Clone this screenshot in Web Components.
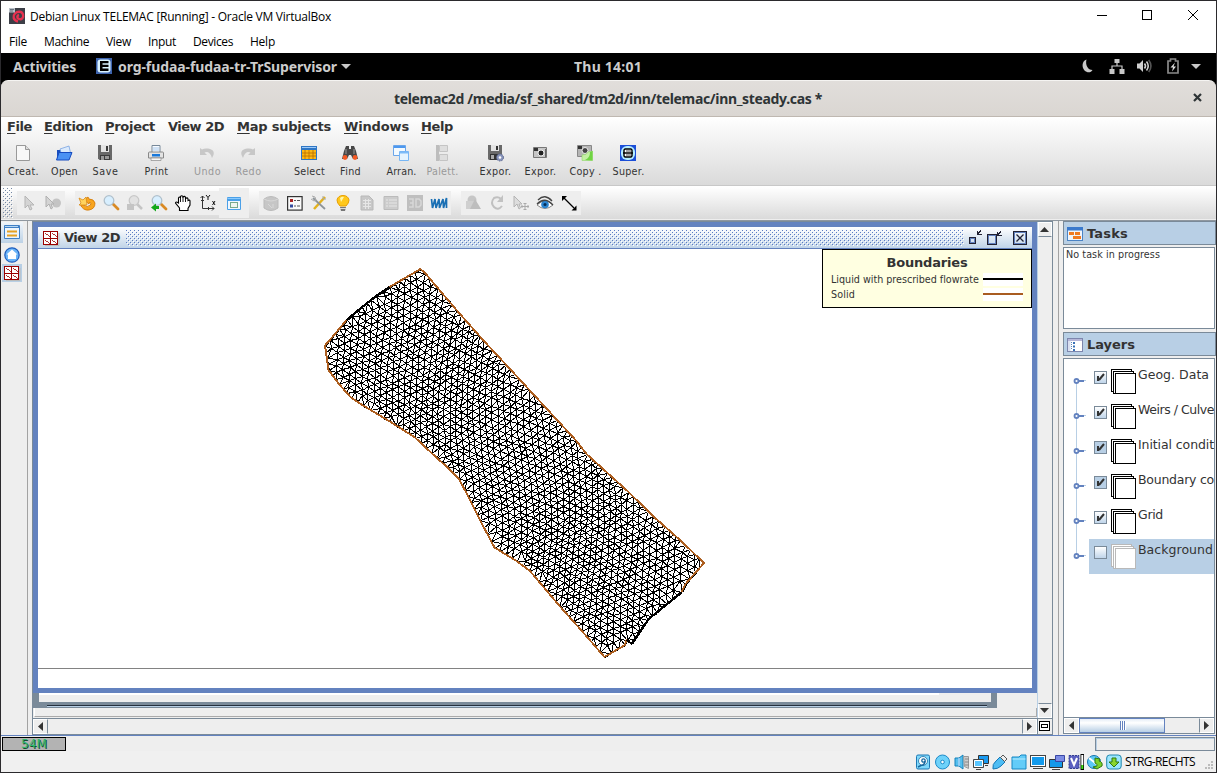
<!DOCTYPE html>
<html lang="en">
<head>
<meta charset="utf-8">
<title>Debian Linux TELEMAC [Running] - Oracle VM VirtualBox</title>
<style>
html,body{margin:0;padding:0;background:#2b2a2d}
body{width:1217px;height:773px;overflow:hidden}
</style>
</head>
<body>
<vm-window></vm-window>
<script>
const define = (tag, css, html, hook) => {
  const t = document.createElement('template');
  t.innerHTML = `<style>*,:host{box-sizing:border-box}${css}</style>${html}`;
  customElements.define(tag, class extends HTMLElement {
    connectedCallback() {
      if (this.shadowRoot) return;
      this.attachShadow({mode: 'open'}).append(t.content.cloneNode(true));
      if (hook) hook(this, this.shadowRoot);
    }
  });
};

/* Icon set, drawn on a 16 x 16 grid */
const grid = '<path d="M2 15.500h14V3" fill="none" stroke="#bbb"/><g fill="#fff" stroke="#9b0000" shape-rendering="crispEdges"><rect x=".5" y="1.500" width="14" height="13"/><path d="M7.500 1v14M0 8.500h15" stroke-width="1.200"/><path d="M2 3l5 4M9 3l5 4M2 10l5 4M9 10l5 4" stroke-width=".8"/></g>';
const ICONS = {
  debian: '<rect width="16" height="16" fill="#3c3f47"/><path d="M9 13.500C4 12 3.500 8 6 5.500S13 3 14 6.500s-1.500 5.500-4 4.500S8 7.500 10 7" fill="none" stroke="#e8314f" stroke-width="2.400"/><rect width="6" height="4.500" fill="#b9c0c8"/><path d="M1 1.500h4M1 3h3" stroke="#68727d"/>',
  eicon: '<rect width="16" height="16" fill="#3d63ad"/><rect x="1.500" y="1.500" width="13" height="13" rx="3" fill="#d9f2ff"/><path d="M4 3h8.500v2.200H6.500v1.500h6V9h-6v1.500h6V13H4z" fill="#000"/>',
  moon: '<path d="M6.500 1.500C2 3 1.500 9 4.500 12.500c2.500 2.500 6.500 2.500 8-.5C8 12 5 7 6.500 1.500z" fill="#c8c8c8"/>',
  net: '<path d="M5.500 1h5v4h-5zM.5 11h5v5h-5zM10.500 11h5v5h-5z" fill="#c8c8c8"/><path d="M8 5v3M3 11V8h10v3" fill="none" stroke="#c8c8c8" stroke-width="1.200"/>',
  vol: '<path d="M1 5.500h2.500L7 2v12L3.500 10.500H1z" fill="#d0d0d0"/><path d="M8.500 5.500q2 2.500 0 5M10.500 3.500q3.500 4.500 0 9" fill="none" stroke="#d0d0d0" stroke-width="1.600"/><path d="M12.700 2q4.500 6 0 12" fill="none" stroke="#555" stroke-width="1.600"/>',
  bat: '<path d="M3 3h2.500V1h5v2H13v12H3z" fill="none" stroke="#8a8a8a" stroke-width="1.700"/><path d="M10 4.500L5.500 9.500H8l-1 4 4-5H8.500z" fill="#e0e0e0"/>',
  down: '<path d="M3 6h10l-5 5z" fill="#c8c8c8"/>',
  page: '<path d="M1.500.5h9l4 4v11h-13z" fill="#f8f8f8" stroke="#999"/><path d="M10.500.5v4h4" fill="#ddd" stroke="#999"/>',
  open: '<path d="M1 5h6l1-2h5v11H1z" fill="#184dbe"/><path d="M4 4l9-3 2 9-9 2z" fill="#dbeafc" stroke="#6b9be0" stroke-width=".7"/><path d="M.5 15L3 7.500h13L13 15z" fill="#4a91f3" stroke="#164bc0"/>',
  save: '<path d="M1 0h14v15H2.500L1 13.500z" fill="#686868"/><path d="M4 0h8v7H4z" fill="#e4e4e4"/><path d="M9 1h2v5H9zM3 10h10v5H3z" fill="#3b3b3b"/><path d="M4 11h3v4H4zM8 11h4v3H8z" fill="#989898"/>',
  print: '<path d="M4 .5h8V8H4z" fill="#f7fbff" stroke="#789"/><path d="M.5 8q0-1 1-1h13q1 0 1 1v5H.5z" fill="#e3e3e3" stroke="#888"/><path d="M5 3h6M5 5h6" stroke="#a7c7ea"/><path d="M4 9h8v2.500H4z" fill="#1878db"/><path d="M3 13h10v2.500H3z" fill="#f8f8f8" stroke="#888" stroke-width=".7"/>',
  undo: '<path d="M1 3v7h7L5.500 7.500q5-2 7.500 5.500 5-8-4-9.500-4-.4-6 1z" fill="#c7c7c7"/>',
  redo: '<path d="M15 3v7H8l2.500-2.500q-5-2-7.500 5.500-5-8 4-9.500 4-.4 6 1z" fill="#c7c7c7"/>',
  table: '<path d="M0 1h16v14H0z" fill="#2f76c4"/><path d="M1 5h14v9H1z" fill="#fdb813"/><path d="M1 8h14M1 11h14M4 5v9M8 5v9M12 5v9" stroke="#b56d00" stroke-width=".8"/><path d="M1 2.500h14" stroke="#9ccafa"/>',
  find: '<path d="M4 1h3v3h2V1h3l2 5 2 8h-5l-2-4H7l-2 4H0l2-8z" fill="#474747"/><path d="M4 4v5M12 4v5" stroke="#999"/><circle cx="3" cy="12.500" r="2.400" fill="#f45a25"/><circle cx="13" cy="12.500" r="2.400" fill="#f45a25"/>',
  arr: '<path d="M.5.5h12v10H.5z" fill="#f4faff" stroke="#6ba6ea"/><path d="M1 1h11v2H1z" fill="#4d98ef"/><path d="M6.500 6.500h9v9h-9z" fill="#e5f4ff" stroke="#77b6f5"/><path d="M7 7h8v1.500H7z" fill="#7dbcf8"/>',
  pal: '<path d="M2 0h3v16H2z" fill="#bdbdbd"/><path d="M5.500.5h8v6h-8zM5.500 9.500h8v6h-8z" fill="#dedede" stroke="#c4c4c4"/>',
  expsave: '<path d="M1 0h14v15H2l-1-1z" fill="#696969"/><path d="M4 0h8v6H4z" fill="#e4e4e4"/><path d="M9 1h2v4H9zM3 9h9v6H3z" fill="#333"/><path d="M4 10h3v4H4z" fill="#aaa"/><circle cx="13" cy="12.500" r="3.500" fill="#8894bb" stroke="#5b668c" stroke-dasharray="1.500 1"/><circle cx="13" cy="12.500" r="1.300" fill="#fff"/>',
  cam: '<path d="M1.500 2.500h13v10h-13z" fill="#c6c6c6" stroke="#777"/><path d="M2 3h4v3H2z" fill="#333"/><circle cx="9" cy="8" r="3" fill="#222" stroke="#eee"/><path d="M13.500 4v8" stroke="#666"/>',
  copy: '<path d="M.5.5h14v11H.5z" fill="#b4b4b4" stroke="#888"/><path d="M1 1h4v3H1z" fill="#333"/><circle cx="8" cy="5.500" r="3" fill="#444" stroke="#eee"/><path d="M5 15.500V10q5 0 6-3l4.500-1v9.500z" fill="#c3f0a3" stroke="#8fd66a" stroke-width=".6"/><path d="M8 15q5-2 5-8l2.500-1v9.500z" fill="#70d443"/>',
  sup: '<rect width="16" height="16" fill="#1b4ed8"/><rect x="1" y="1" width="14" height="14" rx="6" fill="#b6edff"/><path d="M5 4h6l1 1v6l-1 1H5l-1-1V5zM3 8h10" fill="#fff" stroke="#000" stroke-width="1.400"/><path d="M6 6h5M6 10h5" stroke="#000" stroke-width=".7"/>',
  arrow: '<path d="M4 1v12l3-3 2 5 2-1-2-4h4z" fill="#d4d4d4" stroke="#b5b5b5"/>',
  arrow2: '<circle cx="11.500" cy="8" r="4.500" fill="#c4c4c4"/><path d="M1 1v11l3-3 2 5 1.500-1L6 9h3z" fill="#d4d4d4" stroke="#b0b0b0"/>',
  restore: '<path d="M1 9q3 7 9 6t6-7q-1-4-6-4l-1-2-4 3 5 4 .5-2q2 1 1 3-3 3-7 0z" fill="#f8a51f" stroke="#cf7400" stroke-width=".8"/><path d="M0 3l4 2 3-3 1 8H0l2-2z" fill="#ffd35e" stroke="#d98a1a" stroke-width=".8"/>',
  zoom: '<path d="M10 9l5 5" stroke="#d98a24" stroke-width="2.800" stroke-linecap="round"/><circle cx="6" cy="5.500" r="4.800" fill="#d8efff" stroke="#b0c0cc" stroke-width="1.300"/>',
  zoomg: '<path d="M10 9l5 5" stroke="#c4c4c4" stroke-width="2.500"/><circle cx="7" cy="5.500" r="4.800" fill="#e2e2e2" stroke="#c8c8c8" stroke-width="1.300"/><path d="M0 9h7v6H0z" fill="#c4c4c4"/>',
  zoomb: '<path d="M10 9l5 5" stroke="#d98a24" stroke-width="2.800" stroke-linecap="round"/><circle cx="6" cy="5.500" r="4.800" fill="#d8efff" stroke="#b0c0cc" stroke-width="1.300"/><path d="M0 12.500l5-4V11h3v3H5v2.500z" fill="#13a91b"/>',
  hand: '<path d="M4.500 15.500V13L.5 8q0-2 3 0V3q1-2 2 0V1.500q1-1.500 2.500 0V2q2-1.500 2.500.5v1q2-1.500 2.500.5v1.500q2-1 2 .5v4l-2 3.500v2z" fill="#fff" stroke="#000" stroke-width="1.100"/><path d="M5.500 3v4M8 2v5M10.500 3v4" stroke="#000" stroke-width=".9"/>',
  axes: '<g fill="none" stroke="#333"><path d="M3.500 1v12.500H15M1.500 3l2-2 2 2M13 11.500l2 2-2 2M2 5.500h3M9.500 12v3"/><path d="M7 0l2 2.500L11 0M9 2.500V5M13.500 6l2.500 4M16 6l-2.500 4" stroke="#111"/></g>',
  win: '<rect x="1" y="2" width="14" height="13" rx="1" fill="#4aa0e8"/><path d="M2 6h12v8H2z" fill="#eff7ff"/><path d="M1.500 3.500h13" stroke="#8bcbff"/><rect x="4.500" y="7.500" width="7" height="5" fill="#eef5ee" stroke="#77a98d"/>',
  db: '<path d="M1 4q7-5 14 0v9q-7 5-14 0z" fill="#c6c6c6" stroke="#bababa"/><path d="M1 4q7 4 14 0M5 9l4 4M10 9v4" fill="none" stroke="#d8d8d8"/>',
  list: '<rect x=".6" y="1.600" width="14.500" height="13.500" fill="#fafafa" stroke="#333" stroke-width="1.200"/><path d="M3 4h3v3H3z" fill="#a22"/><path d="M3 9.500h3v3H3z" fill="#334a9d"/><path d="M7 5.500h2M10 5.500h3M7 11h2M10 11h3" stroke="#555"/>',
  tools: '<path d="M14 2L3 14" stroke="#e3b21d" stroke-width="2.500"/><path d="M2 3l12 11" stroke="#8e959a" stroke-width="1.800"/><path d="M1 1l3 1 1 3-2 1-3-2M12 4V1M12 4h3" stroke="#aaa" fill="none"/>',
  bulb: '<path d="M5 11q-3-3-3-6 1-4.500 6-4.500T14 5q0 3-3 6z" fill="#ffc81c" stroke="#e9a000"/><path d="M5 3q2-2 4-1l-3 5z" fill="#fff5aa"/><path d="M5 12h6l-1 4H6z" fill="#777"/><path d="M5 13.500h6" stroke="#ddd"/>',
  gsheet: '<path d="M2 1h8l4 4v10H2z" fill="#c8c8c8" stroke="#b8b8b8"/><path d="M4 5.500h8M4 8.500h8M4 11.500h8M6.500 4v10M9.500 4v10" stroke="#e6e6e6"/>',
  glist: '<path d="M1 1.500h14v13H1z" fill="#ccc" stroke="#bbb"/><path d="M3 5h2M3 8h2M3 11h2M6 5h8M6 8h8M6 11h8" stroke="#e6e6e6"/>',
  g3d: '<path d="M0 0h16v16H0z" fill="#bfbfbf"/><path d="M2 4h4v8H2M3 8h3M9 4v8h3l2-2V6l-2-2z" fill="none" stroke="#d8d8d8" stroke-width="1.500"/>',
  wave: '<path d="M.5 4l1 9L4 4l1 9L8 4l.5 9L12 4l.5 9L15.500 3v10" fill="none" stroke="#1b70b4" stroke-width="1.700"/>',
  shapes: '<circle cx="7" cy="5" r="4.500" fill="#c6c6c6"/><path d="M1 6h8v8H1z" fill="#cfcfcf"/><path d="M10 4l6 10H5z" fill="#bdbdbd"/>',
  rot: '<path d="M12 4q-3-3-7-1-4 5 0 9 4 4 8-1" fill="none" stroke="#c0c0c0" stroke-width="2"/><path d="M14 0v7H8z" fill="#c2c2c2"/>',
  arrmove: '<path d="M1 1v11l3-3 2 5 1.500-1L6 9h3z" fill="#ddd" stroke="#b4b4b4"/><path d="M8 11.500h8M12 8v7M9 10v3M15 10v3M10.500 8.500h3M10.500 14.500h3" stroke="#aaa" fill="none"/>',
  eye: '<path d="M1 5q7-7 14 1" fill="none" stroke="#444" stroke-width="1.300"/><path d="M0 10q8-8 16 0-8 7-16 0z" fill="#fff" stroke="#888"/><circle cx="8" cy="9.500" r="3.800" fill="#2a83cf"/><circle cx="8" cy="9.500" r="1.500" fill="#052e57"/><path d="M0 9q8-8 16 1" fill="none" stroke="#444" stroke-width="1.300"/>',
  diag: '<path d="M3 3l10 10" stroke="#000" stroke-width="1.200"/><path d="M1 1h5L1 6zM15.500 15.500h-5l5-5z" fill="#000"/>',
  yl: '<rect x="0" y="1" width="16" height="14" rx="1" fill="#3f7fc5"/><path d="M1 4h14v10H1z" fill="#edf5fc"/><path d="M3 7.500h10M3 11.500h10" stroke="#e8a221" stroke-width="2"/><path d="M1 2.500h13" stroke="#b4d7f5"/>',
  home: '<circle cx="8" cy="8" r="7.200" fill="#6ab4f8" stroke="#1f5ebe" stroke-width="1.200"/><path d="M8 2.500l5.500 5H12V12H4V7.500H2.500z" fill="#fff"/>',
  grid,
  task: '<rect x=".5" y="1.500" width="15" height="13" fill="#f0f5fb" stroke="#4b83c4"/><path d="M0 1h16v3.500H0z" fill="#3a79cc"/><path d="M2 6h5v3H2zM6 10h8v3H6zM8 6h5v3H8z" fill="#f07b22"/>',
  lay: '<rect x=".5" y="1.500" width="15" height="13" fill="#fff" stroke="#7d86ad"/><path d="M1 2h14v2H1z" fill="#b6b6d8"/><path d="M1 4h2.500v10H1z" fill="#d9dff0"/><path d="M6 5h2v2H6zM6 8.500h2v2H6zM6 12h2v2H6z" fill="#3871b7"/><path d="M4.500 5v8" stroke="#5988bb" stroke-dasharray="1 1"/>',
  hdd: '<rect x="1.500" y="1" width="13" height="14" rx="1.500" fill="#7fd8fb" stroke="#1d78b5"/><circle cx="8" cy="7" r="4.500" fill="#fff" stroke="#3686b6"/><circle cx="8.500" cy="6.500" r="1.700" fill="none" stroke="#17679e" stroke-width="1.300"/><path d="M10 7q0 4-4 4.500l-3 1.500" stroke="#17679e" fill="none" stroke-width="1.500"/>',
  cd: '<circle cx="8.500" cy="8" r="7" fill="#6ed2fa" stroke="#1d8ac8"/><circle cx="8.500" cy="8" r="1.800" fill="#fff" stroke="#1d8ac8"/>',
  audio: '<path d="M1 4h4l4-3v14l-4-3H1z" fill="#56bfee" stroke="#1582bb"/><path d="M5 4v8" stroke="#cdf"/><path d="M9.500 2.500h5v12l-4-2z" fill="#ccc" stroke="#999"/><path d="M11 5h4M11 8h4M11 11h4" stroke="#888"/>',
  nets: '<path d="M5.500 1.500h10v8h-10z" fill="#1a9af0" stroke="#333"/><path d="M.5 5.500h10v8H.5z" fill="#56c5ff" stroke="#444"/><path d="M1.500 6.500h8v6h-8z" fill="none" stroke="#fff"/><path d="M3 15.500h5M12 11.500h3" fill="none" stroke="#444"/>',
  usb: '<path d="M1 15q-1-5 3-8l4-4 5 5-4 4q-3 3-8 3z" fill="#4ebdf4" stroke="#1678b6"/><path d="M8.500 3.500L11 1l4 4-2.500 2.500z" fill="#eee" stroke="#555"/>',
  fold: '<path d="M1 3h7l2-2h5v14H1z" fill="#63ccf8" stroke="#1687c4"/><path d="M1.500 5h13" stroke="#bcecff"/>',
  disp: '<rect x=".5" y="1.500" width="15" height="11" fill="#139aec" stroke="#444"/><rect x="1.500" y="2.500" width="13" height="9" fill="none" stroke="#fff"/><path d="M3 14.500h10" stroke="#444"/>',
  rec: '<path d="M.5 5.500h13v8H.5z" fill="#1599e9" stroke="#333"/><path d="M6.500 1.500h9v6h-9z" fill="#7b8ce4" stroke="#3947a5"/><path d="M3 15.500h8" stroke="#444"/>',
  vcpu: '<rect x="1" y="1.500" width="10" height="13" fill="#5a5fc0" stroke="#333f8f" stroke-dasharray="2 1"/><path d="M3 4l3 7 3-7" fill="none" stroke="#fff" stroke-width="2"/><path d="M12.500 0v16H16V0z" fill="#000"/><path d="M13.300 1v10h2V1z" fill="#fff"/><path d="M13.300 11v4h2v-4z" fill="#41db16"/>',
  mouse: '<circle cx="7" cy="8" r="6.500" fill="#5cc9f5" stroke="#1473ad"/><path d="M2 4l10 8" stroke="#fff" stroke-width="2"/><path d="M8 4l5 1-1 2q4 1 3 5l-5 3-4-2 4-1q1-2-2-3z" fill="#7bd12a" stroke="#317811"/>',
  key: '<rect x=".7" y="1" width="14.500" height="14" rx="3" fill="#9be6ff" stroke="#2287ae"/><path d="M6 4h4v4h3l-5 5-5-5h3z" fill="#8ad52e" stroke="#2d7911"/>'
};
define('app-icon', ':host{display:block;width:16px;height:16px;flex:none}svg{display:block;width:100%;height:100%;overflow:visible}', '<svg viewBox="0 0 16 16"></svg>',
  (el, r) => { r.querySelector('svg').innerHTML = ICONS[el.getAttribute('name')] || ''; });

/* One line of text, tracked so that it fills the width given in w */
define('fit-text', ':host{display:block;white-space:pre;flex:none}span{display:inline-block}', '<span><slot></slot></span>',
  (el, r) => {
    const s = r.querySelector('span'), w = +el.getAttribute('w');
    if (w) { el.style.width = w + 'px'; s.style.letterSpacing = (w - s.getBoundingClientRect().width) / el.textContent.length + 'px'; }
  });

/* Stippled metal texture: one dot every four pixels, rows offset by two */
define('dot-texture', ':host{display:block;color:#5a7bc4}svg{display:block;width:100%;height:100%}',
  '<svg shape-rendering="crispEdges"><defs><pattern id="p" width="4" height="4" patternUnits="userSpaceOnUse"><path d="M0 0h1v1H0zM2 2h1v1H2z" fill="currentColor"/><path d="M1 1h1v1H1zM3 3h1v1H3z" fill="#fff"/></pattern></defs><rect width="100%" height="100%" fill="url(#p)"/></svg>');

define('vm-titlebar', `:host{display:flex;height:30px;background:#fff;align-items:center;padding:0 17px 0 8px;font:12px "Open Sans",sans-serif;color:#000}
 app-icon{margin-right:5px}.sp{flex:1}svg{width:104px;height:14px;shape-rendering:crispEdges;margin-bottom:2px}`,
 `<app-icon name="debian"></app-icon><fit-text w="301">Debian Linux TELEMAC [Running] - Oracle VM VirtualBox</fit-text><div class="sp"></div>
 <svg viewBox="0 0 104 14" fill="none" stroke="#000"><path d="M2 7.500h10M47.500 2.500h9v9h-9z"/><path d="M93 2l10 10M103 2L93 12" shape-rendering="auto"/></svg>`);
define('vm-menubar', `:host{display:flex;height:22px;background:#fff;padding:1px 0 0 8px;gap:17px;font:12px/20px "Open Sans",sans-serif;color:#000}`,
 '<fit-text w="18">File</fit-text><fit-text w="45">Machine</fit-text><fit-text w="25">View</fit-text><fit-text w="28">Input</fit-text><fit-text w="40">Devices</fit-text><fit-text w="25">Help</fit-text>');
define('gnome-bar', `:host{display:flex;height:27px;background:#000;color:#ccc;font:bold 14px/27px "Noto Sans",sans-serif;padding-left:12px;align-items:center}`,
 `<fit-text w="63">Activities</fit-text><app-icon name="eicon" style="margin:0 6px 2px 20px"></app-icon><fit-text w="219">org-fudaa-fudaa-tr-TrSupervisor</fit-text><app-icon name="down" style="margin:0 0 2px 1px"></app-icon>
 <fit-text style="margin:0 438px 0 220px" w="68">Thu 14:01</fit-text><app-icon name="moon" style="margin-bottom:1px"></app-icon><app-icon name="net" style="margin:0 0 1px 13px"></app-icon><app-icon name="vol" style="margin:0 0 1px 11px"></app-icon><app-icon name="bat" style="margin:0 0 1px 13px"></app-icon><app-icon name="down" style="margin:0 0 2px 7px"></app-icon>`);
define('app-titlebar', `:host{display:block;background:#000}.b{display:flex;height:37px;align-items:center;border-radius:7px 7px 0 0;background:linear-gradient(#e1dedb,#dad6d2);border-top:1px solid #f5f4f2;border-bottom:1px solid #bfb8b1;color:#2e3436;font:bold 14px/20px "Noto Sans",sans-serif;padding-left:393px}
 svg{width:9px;height:9px;margin:0 0 2px 371px}`,
 `<div class="b"><fit-text w="428">telemac2d /media/sf_shared/tm2d/inn/telemac/inn_steady.cas *</fit-text><svg viewBox="0 0 9 9"><path d="M1 1l7 7M8 1L1 8" stroke="#2e3436" stroke-width="2.200"/></svg></div>`);
define('app-menubar', `:host{display:flex;height:21px;padding-left:6px;font:bold 13px/19px "DejaVu Sans",sans-serif;color:#333}u{text-underline-offset:2px}`,
 `<fit-text w="25"><u>F</u>ile</fit-text><fit-text w="49" style="margin-left:12px"><u>E</u>dition</fit-text><fit-text w="50" style="margin-left:12px"><u>P</u>roject</fit-text><fit-text w="56" style="margin-left:13px">View 2D</fit-text><fit-text w="94" style="margin-left:13px"><u>M</u>ap subjects</fit-text><fit-text w="65" style="margin-left:13px"><u>W</u>indows</fit-text><fit-text w="32" style="margin-left:12px"><u>H</u>elp</fit-text>`);
define('tool-button', `:host{display:flex;width:41px;flex:none;flex-direction:column;align-items:center;font:9.600px/12px "DejaVu Sans",sans-serif;color:#333}:host([off]){color:#999}.t{margin-top:5px}app-icon{position:relative;right:1px}`,
 '<app-icon></app-icon><fit-text class="t"></fit-text>', (el, r) => {
   const i = document.createElement('app-icon'); i.setAttribute('name', el.getAttribute('icon')); r.querySelector('app-icon').replaceWith(i);
   const f = document.createElement('fit-text'); f.className = 't'; f.textContent = el.getAttribute('label'); f.setAttribute('w', el.getAttribute('w')); r.querySelector('fit-text').replaceWith(f);
 });
define('main-toolbar', ':host{display:flex;height:47px;padding:7px 0 0 2px}i{width:10px;flex:none}',
 `<tool-button icon="page" label="Creat." w="31"></tool-button><tool-button icon="open" label="Open" w="27"></tool-button><tool-button icon="save" label="Save" w="26"></tool-button><i></i>
 <tool-button icon="print" label="Print" w="24"></tool-button><i></i><tool-button off icon="undo" label="Undo" w="27"></tool-button><tool-button off icon="redo" label="Redo" w="26"></tool-button><i style="width:20px"></i>
 <tool-button icon="table" label="Select" w="31"></tool-button><tool-button icon="find" label="Find" w="21"></tool-button><i></i><tool-button icon="arr" label="Arran." w="30"></tool-button><tool-button off icon="pal" label="Palett." w="32"></tool-button><i></i>
 <tool-button style="width:45px" icon="expsave" label="Expor." w="32"></tool-button><tool-button style="width:45px" icon="cam" label="Expor." w="32"></tool-button><tool-button style="width:45px" icon="copy" label="Copy ." w="32"></tool-button><tool-button icon="sup" label="Super." w="32"></tool-button>`);
define('icon-group', ':host{display:flex;height:24px;background:#eee}.c{width:24px;height:24px;padding:4px}', '<slot></slot>', (el, r) => {
  el.getAttribute('icons').split(' ').forEach(n => { const d = document.createElement('div'); d.className = 'c'; d.innerHTML = `<app-icon name="${n}"></app-icon>`; r.append(d); });
});
define('icon-toolbar', `:host{display:flex;height:33px;background:linear-gradient(#fff,#dadada);align-items:center;border-top:1px solid #fff}
 .grip{width:10px;height:30px;margin:0 4px 0 2px;color:#7488a5}
 .sel{width:30px;height:30px;background:#eee;padding:7px;margin-right:10px}`,
 `<dot-texture class="grip"></dot-texture><icon-group icons="arrow arrow2" style="margin-right:10px"></icon-group><icon-group icons="restore zoom zoomg zoomb hand axes"></icon-group><div class="sel"><app-icon name="win"></app-icon></div><icon-group icons="db list tools bulb gsheet glist g3d wave" style="margin-right:10px"></icon-group><icon-group icons="shapes rot arrmove eye diag"></icon-group>`);

define('arrow-button', `:host{display:flex;width:15px;height:15px;background:#eee;align-items:center;justify-content:center;flex:none;border:1px solid #fff}svg{width:9px;height:9px;flex:none;margin:0 1px 1px 0}`, '<svg viewBox="0 0 9 9"><path d="M0 7h9L4.500 2z" fill="#333"/></svg>',
 (el, r) => { r.querySelector('svg').style.transform = `rotate(${el.getAttribute('turn') || 0}deg)`; });

define('side-strip', `:host{display:flex;flex-direction:column;width:27px;flex:none;background:#eee;border-right:1px solid #a2a2a2;padding-top:1px}
 div{width:22px;flex:none;height:20px;padding:2px 3px}.a{height:21px;background:linear-gradient(#f0f5fa,#bdd2e6)}.b{margin:2px 0 0;height:19px}.c{width:20px;margin-left:1px;padding-left:2px;height:18px;padding-top:1px;background:#b8cfe5}`,
 '<div class="a"><app-icon name="yl"></app-icon></div><div class="b"><app-icon name="home"></app-icon></div><div class="c"><app-icon name="grid"></app-icon></div>');

define('map-legend', `:host{display:block;width:210px;height:59px;background:#ffffe1;border:1px solid #000;font:9.600px/12px "DejaVu Sans",sans-serif;color:#333;padding:4px 8px}
 h3{margin:0 0 2px;font:bold 13px/17px "DejaVu Sans",sans-serif;display:flex;justify-content:center}div{display:flex;height:13px;justify-content:space-between;margin-bottom:2px}div fit-text{padding-top:1px}
 b{width:40px;height:13px;background:#fff;padding-top:5px;flex:none}b::before{content:"";display:block;height:2px;background:var(--c)}`,
 `<h3><fit-text w="81">Boundaries</fit-text></h3><div><fit-text w="148">Liquid with prescribed flowrate</fit-text><b style="--c:#000"></b></div><div><fit-text w="24">Solid</fit-text><b style="--c:#a95c20"></b></div>`);

/* Finite element mesh of the river reach: Delaunay triangles over a warped lattice */
define('river-mesh', ':host{display:block;width:994px;height:440px}svg{display:block;width:994px;height:440px}', '<svg viewBox="38 249 994 440" shape-rendering="crispEdges" fill="none"></svg>', (el, r) => {
  const P = [[420.5,269],[405,278],[389.5,287],[376,296],[362,307],[346.5,320],[335,334],[325,345.5],[328.5,370],[339,384],[351,397.5],[363,405.5],[390,421.5],[415,437.5],[431.5,453],[447,467],[459,479],[468,496],[480,520],[494.5,547.5],[516.5,561],[530,571],[560,606.5],[581.5,630.5],[604.5,657],[625,645],[626.5,640],[631.5,643.5],[648,620],[656.5,612.5],[681.5,592],[685.5,584],[704,563],[680,540],[653,516],[628,491.5],[586.5,454],[576,440.5],[510,369],[483,340],[456.5,310],[441.5,292.5],[425,273]];
  const inside = (x, y) => { let c = false; for (let i = 0, j = P.length - 1; i < P.length; j = i++) { const [a, b] = P[i], [d, e] = P[j]; if ((b > y) !== (e > y) && x < (d - a) * (y - b) / (e - b) + a) c = !c; } return c; };
  const pts = [], S = 7;
  P.forEach(([a, b], i) => { const [c, d] = P[(i + 1) % P.length], n = Math.max(1, Math.round(Math.hypot(c - a, d - b) / S)); for (let k = 0; k < n; k++) pts.push([a + (c - a) * k / n, b + (d - b) * k / n]); });
  const edge = pts.slice();
  let seed = 7; const rnd = () => (seed = (seed * 16807) % 2147483647) / 2147483647;
  for (let j = -60; j < 60; j++) for (let i = -60; i < 60; i++) {
    const u = (j + (i & 1) / 2) * S, v = i * S * .866;
    const x = 515 + v + 4 * Math.sin(u / 40) + 2 * Math.sin(v / 37 + u / 61) + (rnd() - .5) * 1.3;
    const y = 462 + u - 5 * Math.sin(v / 48) + 2 * Math.cos(u / 39 - v / 47) + (rnd() - .5) * 1.3;
    if (inside(x, y) && !edge.some(e => Math.hypot(e[0] - x, e[1] - y) < S * .68)) pts.push([x, y]);
  }
  const tri = (a, b, c) => { const [ax, ay] = V[a], [bx, by] = V[b], [cx, cy] = V[c], D = 2 * (ax * (by - cy) + bx * (cy - ay) + cx * (ay - by)) || 1e-9, A = ax * ax + ay * ay, B = bx * bx + by * by, C = cx * cx + cy * cy, x = (A * (by - cy) + B * (cy - ay) + C * (ay - by)) / D, y = (A * (cx - bx) + B * (ax - cx) + C * (bx - ax)) / D; return {p: [a, b, c], x, y, r: (ax - x) ** 2 + (ay - y) ** 2}; };
  const V = pts.map(p => [p[0] + rnd() * .01, p[1] + rnd() * .01]).sort((a, b) => a[0] - b[0]), n = V.length;
  V.push([-4000, -3000], [5000, -3000], [500, 8000]);
  let open = [tri(n, n + 1, n + 2)]; const done = [];
  for (let i = 0; i < n; i++) {
    const [x, y] = V[i], E = new Map(), keep = [];
    for (const t of open) {
      const dx = x - t.x;
      if (dx > 0 && dx * dx > t.r) { done.push(t); continue; }
      if (dx * dx + (y - t.y) ** 2 < t.r) { const q = t.p; for (const [a, b] of [[q[0], q[1]], [q[1], q[2]], [q[2], q[0]]]) { const k = Math.min(a, b) + '_' + Math.max(a, b); E.has(k) ? E.set(k, null) : E.set(k, [a, b]); } } else keep.push(t);
    }
    open = keep; for (const e of E.values()) if (e) open.push(tri(e[0], e[1], i));
  }
  const L = new Set();
  for (const t of done.concat(open)) { const q = t.p; if (q.some(k => k >= n)) continue; if (!inside((V[q[0]][0] + V[q[1]][0] + V[q[2]][0]) / 3, (V[q[0]][1] + V[q[1]][1] + V[q[2]][1]) / 3)) continue;
    for (const [a, b] of [[q[0], q[1]], [q[1], q[2]], [q[2], q[0]]]) L.add(Math.min(a, b) + '_' + Math.max(a, b)); }
  let d = ''; for (const k of L) { const [a, b] = k.split('_'); d += `M${Math.round(V[a][0]) + .5} ${Math.round(V[a][1]) + .5}L${Math.round(V[b][0]) + .5} ${Math.round(V[b][1]) + .5}`; }
  const line = a => 'M' + a.map(p => p.join(' ')).join('L');
  r.querySelector('svg').innerHTML = `<path d="${d}" stroke="#000"/><path d="${line(P)}Z" stroke="#ad5f20" stroke-width="1.900"/><path d="${line(P.slice(2, 6))}${line(P.slice(26, 31))}" stroke="#000" stroke-width="2"/>`;
});

define('view-window', `:host{display:flex;flex-direction:column;width:1004px;height:471px;border:5px solid #6382bf;background:#fff;position:relative}
 .t{display:flex;height:22px;flex:none;border-bottom:1px solid #6382bf;background:linear-gradient(#fff,#c0d4e8);align-items:center;padding:0 0 0 5px;font:bold 13px/20px "DejaVu Sans",sans-serif;color:#333}
 .d{width:838px;height:16px;margin:0 3px 0 6px}
 svg{width:62px;height:16px}.m{height:420px;flex:none;border-bottom:1px solid #828282;overflow:hidden}map-legend{position:absolute;right:0;top:22px}`,
 `<div class="t"><app-icon name="grid"></app-icon><fit-text w="56" style="margin-left:5px">View 2D</fit-text><dot-texture class="d"></dot-texture>
 <svg viewBox="0 0 62 16" fill="none" shape-rendering="crispEdges"><path d="M3.500 8.500h4v4h-4zM21.500 5.500h7v8h-7zM47.500 2.500h11v11h-11z" stroke="#6382bf"/><path d="M2.500 7.500h6v6h-6zM14 .5l-4 4M10.500 1v3.500h4M20.500 4.500h9v10h-9zM34 1.500l-4 4M30.500 2v3.500h4M46.500 1.500h13v13h-13z" stroke="#223"/><path d="M49.500 4.500l7 7M56.500 4.500l-7 7" stroke="#223" stroke-width="1.300" shape-rendering="auto"/></svg></div>
 <div class="m"><river-mesh></river-mesh></div><map-legend></map-legend>`);

define('desktop-pane', `:host{display:grid;grid-template-columns:1004px 15px;grid-template-rows:496px 16px;width:1021px;flex:none;height:514px;margin-left:4px;border:1px solid #7a8a99;background:#eee}
 .w{overflow:hidden}.back{width:964px;height:15px;border:6px solid #7a8a99;border-top:0;background:#eee;position:relative}.back::before{content:"";display:block;height:2px;background:#fff;width:900px}.back::after{content:"";position:absolute;left:8px;right:4px;bottom:-4px;height:1px;background:#25303d;box-shadow:0 1px #b8cfe5}
 .e{height:9px;border:1px solid #aaa;border-width:0 1px 1px 0;margin-left:1px;border-left:1px solid #fff}
 .v{display:flex;flex-direction:column;justify-content:space-between;border-left:1px solid #b8cfe5;background:#eee}.v arrow-button{width:14px}
 .v arrow-button:first-child{border-bottom-color:#7a8a99}.v arrow-button:last-child{border-top-color:#7a8a99}
 .h{display:flex;justify-content:space-between;border-top:1px solid #7a8a99;}.h arrow-button:first-child{border-right-color:#7a8a99}.h arrow-button:last-child{border-left-color:#7a8a99}
 .k{border:1px solid #7a8a99;border-width:1px 0 0 1px;padding:1px 0}svg{width:13px;height:13px;display:block}`,
 `<div class="w"><view-window></view-window><div class="back"></div><div class="e"></div></div><div class="v"><arrow-button></arrow-button><arrow-button turn="180"></arrow-button></div>
 <div class="h"><arrow-button turn="-90"></arrow-button><arrow-button turn="90"></arrow-button></div><div class="k"><svg viewBox="0 0 13 13" shape-rendering="crispEdges"><path d="M1.500 1.500h10v9h-10zM3.500 4.500h6v3h-6z" fill="#fff" stroke="#000"/></svg></div>`);

define('panel-header', `:host{display:flex;height:24px;flex:none;background:#b8cfe5;border:1px solid #7a8a99;align-items:center;padding:1px 0 0 3px;font:bold 13px/20px "DejaVu Sans",sans-serif;color:#333;gap:4px}`, '<slot></slot>');
define('layer-row', `:host{display:flex;height:35px;flex:none;font:12.500px/17px "DejaVu Sans",sans-serif;color:#333}
 .n{width:25px;height:35px;flex:none}svg{display:block}.r{display:flex;flex:1;min-width:0;overflow:hidden;height:35px;padding:6px 0 0 5px}
 :host([sel]) .r{background:#b8cfe5}.x{width:13px;height:13px;border:1px solid #7a8a99;background:linear-gradient(#fff,#c0d5ea);margin:1px 4px 0 0;flex:none}:host([dark]) .x{background:#b8cfe5}
 .s{width:26px;height:26px;flex:none;margin:-1px 1px 0 0}fit-text{margin-top:-4px}`,
 `<div class="n"><svg width="25" height="35" shape-rendering="crispEdges"><path class="ln" stroke="#b8cfe5"/><path d="M14 16.500h8" stroke="#b8cfe5"/><circle cx="12.500" cy="17" r="2" fill="#fff" stroke="#6382bf" stroke-width="1.800" shape-rendering="auto"/><path d="M15 17h5" stroke="#6382bf" stroke-width="2"/></svg></div>
 <div class="r"><div class="x"><svg width="11" height="11" viewBox="0 0 11 11"><path class="ck" d="M3 4v5M4 8l5-6" stroke="#333" stroke-width="2" fill="none"/></svg></div><div class="s"><svg width="26" height="26" fill="#fff" stroke="#000" shape-rendering="crispEdges"><path d="M.5.500h20v22H.5z"/><path d="M2.500 2.500h20v22h-20z"/><path d="M4.500 4.500h20v20h-20z"/></svg></div><fit-text></fit-text></div>`,
 (el, r) => {
   const q = s => r.querySelector(s), f = document.createElement('fit-text');
   f.textContent = el.getAttribute('label'); f.setAttribute('w', el.getAttribute('w')); q('fit-text').replaceWith(f);
   q('.ln').setAttribute('d', el.hasAttribute('first') ? 'M12.500 17v18' : el.hasAttribute('sel') ? 'M12.500 0v15' : 'M12.500 0v35');
   if (el.hasAttribute('sel')) { q('.ck').remove(); q('.s svg').setAttribute('stroke', '#b9b9b9'); }
 });
define('side-panels', `:host{display:flex;flex-direction:column;width:153px;flex:none;margin-left:4px;background:#eee}
 .t{height:82px;flex:none;margin:2px 1px 3px 0;border:1px solid #7a8a99;background:#fff;font:9.600px/12px "DejaVu Sans",sans-serif;color:#333;padding:1px 2px}
 .l{margin:2px 1px 0 0;height:376px;flex:none;border:1px solid #7a8a99;background:#fff;display:flex;flex-direction:column;overflow:hidden}.rows{height:358px;flex:none;padding-top:5px}
 .b{display:flex;height:16px;border-top:1px solid #7a8a99;background:#eee}.th{width:86px;border:1px solid #6382bf;background:linear-gradient(#e6eef7,#fff 30%,#b8cfe5);display:flex;justify-content:center;align-items:center;gap:1px}.th i{width:1px;height:9px;background:#6382bf;box-shadow:1px 0 #fff}`,
 `<panel-header><app-icon name="task"></app-icon><fit-text w="41">Tasks</fit-text></panel-header><div class="t"><fit-text w="94">No task in progress</fit-text></div>
 <panel-header><app-icon name="lay"></app-icon><fit-text w="48">Layers</fit-text></panel-header>
 <div class="l"><div class="rows"><layer-row first label="Geog. Data" w="71"></layer-row><layer-row label="Weirs / Culve" w="76"></layer-row><layer-row dark label="Initial condit" w="76"></layer-row><layer-row dark label="Boundary co" w="76"></layer-row><layer-row label="Grid" w="25"></layer-row><layer-row sel label="Background" w="75"></layer-row></div>
 <div class="b"><arrow-button turn="-90"></arrow-button><div class="th"><i></i><i></i><i></i></div><div style="flex:1"></div><arrow-button turn="90" style="border-left-color:#7a8a99"></arrow-button></div></div>`);

define('app-status', `:host{display:flex;height:16px;border-top:1px solid #6382bf;background:#eee;justify-content:space-between;padding:1px 1px 0}
 .m{width:64px;height:14px;border:1px solid #000;background:#b3b3b3;color:#2fba70;font:12px/12px "DejaVu Sans",sans-serif;text-shadow:1px 1px #174e31;display:flex;justify-content:center}.p{width:120px;height:14px;border:1px solid #7a8a99;box-shadow:inset 1px 1px #b8cfe5}`,
 '<div class="m"><fit-text w="26">54M</fit-text></div><div class="p"></div>');
define('vm-status', `:host{display:flex;height:21px;background:#f0f0f0;padding:3px 0 0 914px;gap:3px;font:12px/16px "Open Sans",sans-serif;color:#000}svg{margin:7px 0 0 7px;flex:none}`,
 'hdd cd audio nets usb fold disp rec vcpu mouse key'.split(' ').map((n, i) => `<app-icon name="${n}"${i === 2 ? ' style="margin-left:1px"' : ''}></app-icon>`).join('') +
 '<fit-text w="70">STRG-RECHTS</fit-text><svg width="9" height="9" fill="#bbb"><path d="M6 0h2v2H6zM3 3h2v2H3zM6 3h2v2H6zM0 6h2v2H0zM3 6h2v2H3zM6 6h2v2H6z"/></svg>');

define('vm-window', `:host{display:flex;flex-direction:column;width:1217px;height:773px;border:1px solid #2b2a2d;background:#eee;overflow:hidden}:host>*{flex:none}
 .bars{background:linear-gradient(#fff,#dadada);height:69px;border-bottom:1px solid #c8c8c8}.body{display:flex;height:515px;border-top:1px solid #8f979f;background:#eee}.sp{width:6px;border-right:1px solid #a2a2a2;flex:none}`,
 `<vm-titlebar></vm-titlebar><vm-menubar></vm-menubar><gnome-bar></gnome-bar><app-titlebar></app-titlebar><div class="bars"><app-menubar></app-menubar><main-toolbar></main-toolbar></div><icon-toolbar></icon-toolbar>
 <div style="height:1px;background:#eee"></div><div class="body"><side-strip></side-strip><desktop-pane></desktop-pane><div class="sp"></div><side-panels></side-panels></div><app-status></app-status><vm-status></vm-status>`);
</script>
</body>
</html>
